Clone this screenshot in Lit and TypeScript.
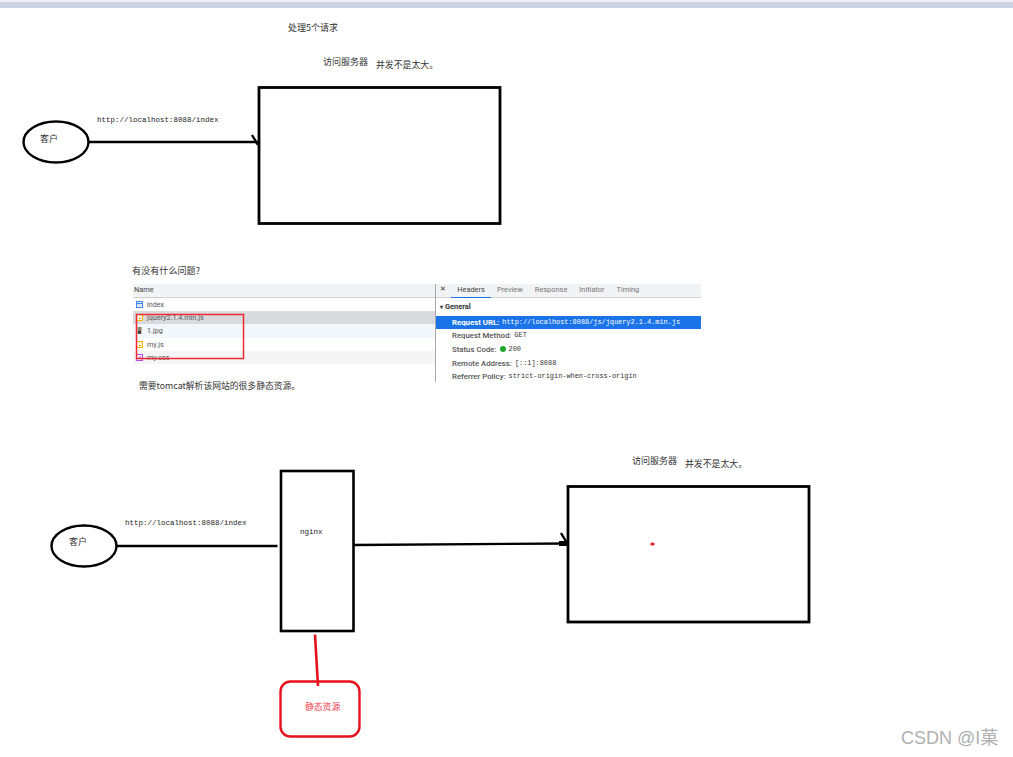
import { LitElement, html, css, svg } from "lit";
import { customElement } from "lit/decorators.js";

type Label = { t: string; x: number; y: number; s?: number; c?: string; m?: boolean };

const labels: Label[] = [
  { t: "处理5个请求", x: 288, y: 22, s: 9 },
  { t: "访问服务器", x: 323, y: 56, s: 9 },
  { t: "并发不是太大。", x: 376, y: 59, s: 8.9 },
  { t: "http://localhost:8088/index", x: 97, y: 114, m: true },
  { t: "客户", x: 40, y: 133, s: 9 },
  { t: "有没有什么问题?", x: 132, y: 264, s: 9.1 },
  { t: "需要tomcat解析该网站的很多静态资源。", x: 139, y: 380, s: 8.8 },
  { t: "http://localhost:8088/index", x: 125, y: 517, m: true },
  { t: "客户", x: 69, y: 536, s: 9 },
  { t: "nginx", x: 300, y: 526, s: 7.5, m: true },
  { t: "访问服务器", x: 632, y: 455, s: 9 },
  { t: "并发不是太大。", x: 685, y: 458, s: 8.9 },
  { t: "静态资源", x: 305, y: 701, s: 8.8, c: "#f0404a" },
];

const files = [
  { n: "index", kind: "doc", cls: "" },
  { n: "jquery2.1.4.min.js", kind: "js", cls: "sel" },
  { n: "1.jpg", kind: "img", cls: "alt" },
  { n: "my.js", kind: "js", cls: "" },
  { n: "my.css", kind: "css", cls: "grey" },
];

const headers = [
  { k: "Request URL:", v: "http://localhost:8088/js/jquery2.1.4.min.js", sel: true },
  { k: "Request Method:", v: "GET" },
  { k: "Status Code:", v: "200", dot: true },
  { k: "Remote Address:", v: "[::1]:8088" },
  { k: "Referrer Policy:", v: "strict-origin-when-cross-origin" },
];

function fileIcon(kind: string) {
  if (kind === "doc")
    return svg`<svg class="ficon" viewBox="0 0 7 7"><rect x=".5" y=".5" width="6" height="6" fill="#dbe8fd" stroke="#4285f4"/><path d="M1 2.5H6" stroke="#4285f4"/></svg>`;
  if (kind === "js")
    return svg`<svg class="ficon" viewBox="0 0 7 7"><rect x=".5" y=".5" width="6" height="6" fill="#fff8e1" stroke="#f4b400"/><path d="M3 4.5H5" stroke="#e0a800"/></svg>`;
  if (kind === "css")
    return svg`<svg class="ficon" viewBox="0 0 7 7"><rect x=".5" y=".5" width="6" height="6" fill="#f6ebff" stroke="#b44cf0"/><path d="M2.5 4.5L5 2.5" stroke="#b44cf0"/></svg>`;
  return svg`<svg class="ficon" viewBox="0 0 7 7"><rect x="1.5" y="0" width="4" height="7" fill="#8d8170"/><rect x="2" y="4" width="3" height="2.6" fill="#3e3a35"/></svg>`;
}

@customElement("app-root")
export class AppRoot extends LitElement {
  static styles = css`
    :host { display: block; width: 1013px; height: 757px; }
    .canvas { position: relative; width: 1013px; height: 757px; background: #fff; overflow: hidden; }
    .topbar { height: 6px; margin-top: 2px; background: #c9d3e1; }
    .topline { position: absolute; left: 0; top: 0; width: 100%; height: 2px; background: #eef0f3; }
    svg.shapes { position: absolute; left: 0; top: 0; }
    .label { position: absolute; white-space: nowrap; color: #333; line-height: 12px;
      font-family: "Noto Sans CJK SC", "Liberation Serif", serif; }
    .label.mono { font-family: "Liberation Mono", "Noto Sans CJK SC", monospace; font-size: 7.5px; color: #222; }
    .watermark { position: absolute; left: 901px; top: 728px; font: 18px/20px "Liberation Sans", "Noto Sans CJK SC", sans-serif;
      color: #b0b0b0; white-space: nowrap; }
    .devtools { position: absolute; left: 133px; top: 284px; width: 568px; height: 98px; display: flex;
      font: 7.4px/13px Roboto, "Liberation Sans", sans-serif; color: #444; }
    .left { width: 302px; flex: none; }
    .divider { width: 1px; flex: none; background: #a8a8a8; }
    .right { flex: 1; min-width: 0; }
    .namehead { height: 13px; line-height: 11px; background: #f1f3f4; border-bottom: 1px solid #d0d0d0; padding-left: 1px; color: #444; }
    .file { height: 13.2px; display: flex; align-items: center; gap: 4px; padding-left: 3px; color: #555; font-size: 7.2px; }
    .file.sel { background: #d9dadd; }
    .file.alt { background: #f2f7fd; }
    .file.grey { background: #f5f5f5; }
    .ficon { width: 7px; height: 7px; flex: none; display: block; }
    .tabs { height: 13px; line-height: 11px; background: #f1f3f4; border-bottom: 1px solid #d0d0d0; display: flex; padding-left: 4px; color: #777; }
    .tab.close { width: 11px; color: #333; font-size: 7px; }
    .tab.active { color: #444; width: 40px; text-align: center; border-bottom: 1px solid #1a73e8; height: 13px; margin-right: 6px; }
    .tab.plain { margin-right: 12px; }
    .general { margin-top: 2px; padding-left: 4px; font-weight: 700; color: #333; height: 15.5px; }
    .general::before { content: "▾"; margin-right: 2px; font-size: 6px; }
    .hrow { height: 13.6px; display: flex; align-items: center; gap: 3px; padding-left: 16px; white-space: nowrap; font-size: 7.8px; }
    .hrow.sel { background: #1a73e8; color: #fff; }
    .hkey { font-weight: 500; color: #555; }
    .hrow.sel .hkey { color: #fff; font-weight: 700; }
    .hval { font-family: "Liberation Mono", monospace; font-size: 6.9px; color: #333; }
    .hrow.sel .hval { color: #fff; }
    .dot { width: 6px; height: 6px; border-radius: 50%; background: #22a52b; flex: none; }
  `;

  private shapes() {
    return svg`
      <ellipse cx="56" cy="142" rx="32.5" ry="20.5" fill="#fff" stroke="#000" stroke-width="2.4"/>
      <path d="M89 142H258" stroke="#000" stroke-width="2.6" fill="none"/>
      <path d="M252 135L258 145" stroke="#000" stroke-width="2.4" fill="none"/>
      <rect x="259" y="87.5" width="241" height="136" fill="none" stroke="#000" stroke-width="2.8"/>

      <ellipse cx="84" cy="546" rx="32.5" ry="20.5" fill="#fff" stroke="#000" stroke-width="2.4"/>
      <path d="M117 546H277.5" stroke="#000" stroke-width="2.4" fill="none"/>
      <rect x="281" y="471" width="72.5" height="160" fill="none" stroke="#000" stroke-width="2.6"/>
      <path d="M354 545L568 543.5" stroke="#000" stroke-width="2.4" fill="none"/>
      <path d="M559 541H568V546H559Z" fill="#000"/>
      <path d="M561 533L567 543" stroke="#000" stroke-width="2.4" fill="none"/>
      <rect x="568" y="486.5" width="241" height="135.5" fill="none" stroke="#000" stroke-width="2.8"/>
      <ellipse cx="652.5" cy="544" rx="2.2" ry="1.6" fill="#e8101c"/>

      <path d="M315 634.5L318 686" stroke="#e8101c" stroke-width="2.6" fill="none"/>
      <rect x="280.5" y="681.5" width="79" height="55" rx="10" fill="none" stroke="#e8101c" stroke-width="2.4"/>
    `;
  }

  render() {
    return html`
      <div class="canvas">
        <div class="topline"></div>
        <div class="topbar"></div>
        <svg class="shapes" width="1013" height="757" viewBox="0 0 1013 757">${this.shapes()}</svg>
        ${labels.map(
          (l) => html`<span
            class="label ${l.m ? "mono" : ""}"
            style="left:${l.x}px;top:${l.y}px;${l.s ? `font-size:${l.s}px;` : ""}${l.c ? `color:${l.c};` : ""}"
            >${l.t}</span
          >`
        )}
        <div class="devtools">
          <div class="left">
            <div class="namehead">Name</div>
            ${files.map(
              (f) => html`<div class="file ${f.cls}">${fileIcon(f.kind)}<span>${f.n}</span></div>`
            )}
          </div>
          <div class="divider"></div>
          <div class="right">
            <div class="tabs">
              <span class="tab close">✕</span>
              <span class="tab active">Headers</span>
              <span class="tab plain">Preview</span>
              <span class="tab plain">Response</span>
              <span class="tab plain">Initiator</span>
              <span class="tab plain">Timing</span>
            </div>
            <div class="general">General</div>
            ${headers.map(
              (h) => html`<div class="hrow ${h.sel ? "sel" : ""}">
                <span class="hkey">${h.k}</span>
                ${h.dot ? html`<span class="dot"></span>` : ""}
                <span class="hval">${h.v}</span>
              </div>`
            )}
          </div>
        </div>
        <svg class="shapes" width="1013" height="757" viewBox="0 0 1013 757">
          <rect x="136.5" y="314.5" width="107" height="44" fill="none" stroke="#ee2a30" stroke-width="1.5"/>
        </svg>
        <div class="watermark">CSDN @I菓</div>
      </div>
    `;
  }
}
